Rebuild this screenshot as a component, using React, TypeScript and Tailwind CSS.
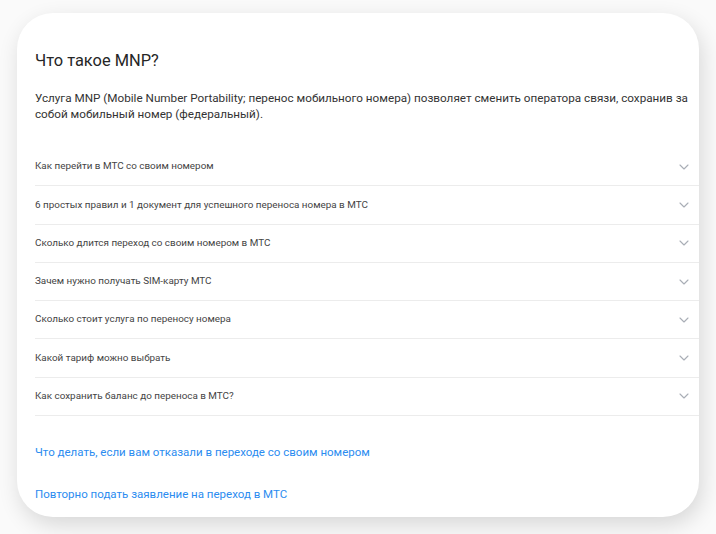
import React from "react";

const rows = [
  "Как перейти в МТС со своим номером",
  "6 простых правил и 1 документ для успешного переноса номера в МТС",
  "Сколько длится переход со своим номером в МТС",
  "Зачем нужно получать SIM-карту МТС",
  "Сколько стоит услуга по переносу номера",
  "Какой тариф можно выбрать",
  "Как сохранить баланс до переноса в МТС?",
];

function Chevron() {
  return (
    <svg width="10" height="6" viewBox="0 0 10 6" fill="none">
      <path d="M1 1L5 5L9 1" stroke="#a9aeb6" strokeWidth="1.1" strokeLinecap="round" strokeLinejoin="round" />
    </svg>
  );
}

export default function App() {
  return (
    <div className="w-[716px] h-[534px] bg-[#fafafa] pt-[13px] pl-[17px]" style={{ fontFamily: "Roboto, 'Liberation Sans', sans-serif" }}>
      <div className="w-[682px] h-[504px] bg-white rounded-[36px] shadow-[3px_8px_22px_rgba(0,0,0,0.14)] pt-[36px] pl-[18px] flex flex-col">
        <h1 className="text-[16.4px] leading-[24px] text-[#262626] font-normal">Что такое MNP?</h1>
        <p className="mt-[17px] pr-[4px] text-[11.7px] leading-[16px] text-[#333333]">
          Услуга MNP (Mobile Number Portability; перенос мобильного номера) позволяет сменить оператора связи, сохранив за собой мобильный номер (федеральный).
        </p>
        <div className="mt-[26px] flex flex-col">
          {rows.map((r) => (
            <div key={r} className="h-[38.3px] flex items-center justify-between border-b border-[#ececec] pr-[10px]">
              <span className="text-[9.9px] text-[#444444]">{r}</span>
              <Chevron />
            </div>
          ))}
        </div>
        <div className="mt-[26px] flex flex-col gap-[22px]">
          <a className="text-[11.5px] leading-[20px] text-[#2b8cf0]">Что делать, если вам отказали в переходе со своим номером</a>
          <a className="text-[11.5px] leading-[20px] text-[#2b8cf0]">Повторно подать заявление на переход в МТС</a>
        </div>
      </div>
    </div>
  );
}
